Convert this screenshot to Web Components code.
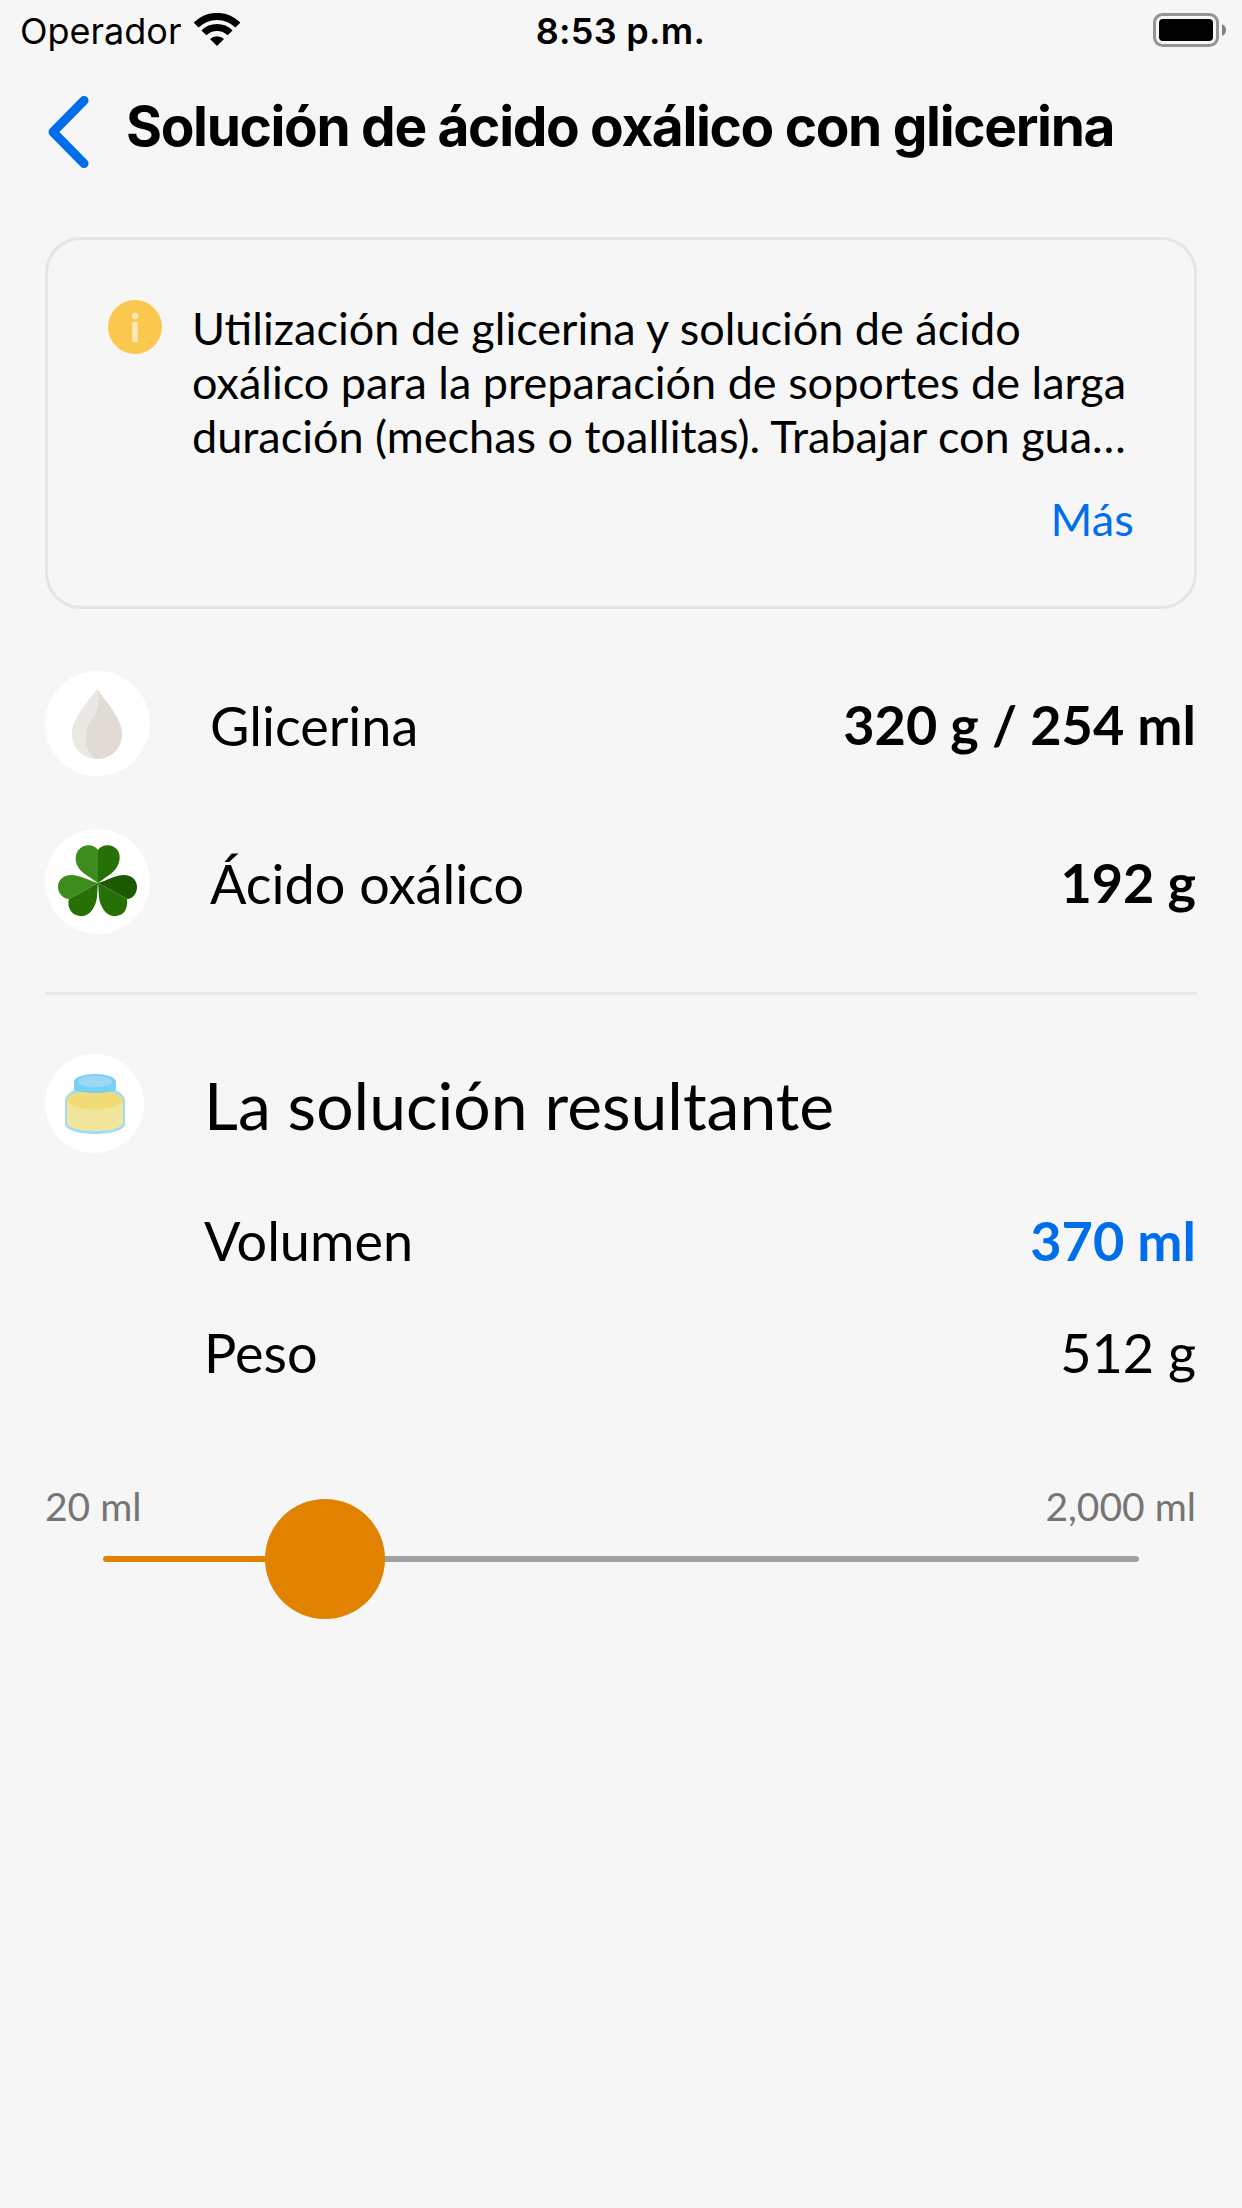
<!DOCTYPE html>
<html lang="es">
<head>
<meta charset="utf-8">
<title>Solución de ácido oxálico con glicerina</title>
<style>
  body {
    margin: 0;
    background: #f6f6f6;
    color: #000;
    font-family: Lato, "Liberation Sans", sans-serif;
    font-size: 54px;
    line-height: 1.2;
  }
</style>
</head>
<body>
<solution-page>
  <status-bar slot="status" carrier="Operador" time="8:53 p.m."></status-bar>
  <nav-header slot="header">Solución de ácido oxálico con glicerina</nav-header>
  <info-card more="Más">Utilización de glicerina y solución de ácido oxálico para la preparación de soportes de larga duración (mechas o toallitas). Trabajar con gua…</info-card>
  <ingredient-row icon="drop">Glicerina<span slot="value">320 g / 254 ml</span></ingredient-row>
  <ingredient-row icon="clover">Ácido oxálico<span slot="value">192 g</span></ingredient-row>
  <result-section heading="La solución resultante">
    <result-row accent>Volumen<span slot="value">370 ml</span></result-row>
    <result-row>Peso<span slot="value">512 g</span></result-row>
  </result-section>
  <volume-slider min-label="20 ml" max-label="2,000 ml"></volume-slider>
</solution-page>

<script>
const icons = {
  drop: `
    <svg viewBox="0 0 105 105">
      <path d="M52 18C44 30 27 47 27 63C27 77 38 88 52 88S77 77 77 63C77 47 60 30 52 18Z" fill="#ebe7e3"/>
      <path d="M52 18C54 25 54 31 53 37C50 47 41 52 41 64C40 72 43 82 50 88C66 89 77 77 77 63C77 47 60 30 52 18Z" fill="#e1dbd5"/>
    </svg>`,
  clover: `
    <svg viewBox="0 0 105 105">
      <path d="M53 54V21C50 16 42 15 37 18C30 22 29 31 33 38C37 45 47 49 53 54Z" fill="#3e8c1e"/>
      <path d="M53 54V21C56 16 64 15 69 18C76 22 76 31 72 38C68 45 59 49 53 54Z" fill="#267006"/>
      <path d="M53 54L24 70C18 70 13 64 13 58C13 51 18 46 26 46C35 46 45 52 53 54Z" fill="#3e8c1e"/>
      <path d="M53 54L24 70C22 76 25 84 31 86C38 89 45 86 49 78C53 71 52 62 53 54Z" fill="#267006"/>
      <path d="M53 54L82 70C88 70 92 64 92 58C92 51 87 46 79 46C70 46 61 52 53 54Z" fill="#1d5803"/>
      <path d="M53 54L82 70C83 76 81 84 75 86C68 89 61 86 57 78C53 71 54 62 53 54Z" fill="#267006"/>
    </svg>`,
  jar: `
    <svg viewBox="0 0 99 99">
      <path d="M29 28V36C24 39 20 42 20 47V70C20 76 34 80 50 80S80 76 80 70V47C80 42 76 39 71 36V28Z" fill="#9fdcf9"/>
      <path d="M22 47H78V69C78 74 65 77 50 77S22 74 22 69Z" fill="#f1e59b"/>
      <ellipse cx="50" cy="46" rx="28" ry="9.5" fill="#f3dc77"/>
      <path d="M29 28V35C29 37 39 39 50 39S71 37 71 35V28Z" fill="#78d0f4"/>
      <ellipse cx="50" cy="28" rx="21" ry="8" fill="#78d0f4"/>
      <ellipse cx="50" cy="27.500" rx="17" ry="5.700" fill="#9cd8f6"/>
    </svg>`
}

/**
 * Attaches an open shadow root with the given markup.
 *
 * @param {HTMLElement} host - The element that gets the shadow root.
 * @param {string} markup - Styles and markup for the shadow root.
 */
function render (host, markup) {
  host.attachShadow({ mode: 'open' }).innerHTML = markup
}

customElements.define('solution-page',

  /**
   * Screen frame: status bar, header and the content column.
   */
  class extends HTMLElement {
    constructor () {
      super()
      render(this, `
        <style>
          :host {
            display: flex;
            flex-direction: column;
            min-height: 2208px;
            box-sizing: border-box;
          }
          main {
            display: flex;
            flex-direction: column;
            padding: 57px 45px 0;
          }
        </style>
        <slot name="status"></slot>
        <slot name="header"></slot>
        <main><slot></slot></main>
      `)
    }
  }
)

customElements.define('status-bar',

  /**
   * Carrier, clock and battery.
   */
  class extends HTMLElement {
    connectedCallback () {
      render(this, `
        <style>
          :host {
            display: grid;
            grid-template-columns: 1fr auto 1fr;
            align-items: center;
            height: 60px;
            padding: 0 16px 0 20px;
            font-family: Inter, sans-serif;
            font-size: 36px;
            line-height: 44px;
          }
          .carrier {
            display: flex;
            align-items: center;
            gap: 12px;
          }
          .carrier span {
            padding-top: 2px;
          }
          .time {
            padding: 2px 5px 0 0;
            font-weight: 600;
            letter-spacing: 0.3px;
          }
          svg {
            display: block;
          }
          .battery {
            justify-self: end;
          }
        </style>
        <div class="carrier">
          <span>${this.getAttribute('carrier')}</span>
          <svg width="46" height="34" viewBox="0 0 46 34">
            <g fill="none" stroke="#000" stroke-width="7">
              <path d="M2.100 12.100A29.500 29.500 0 0 1 43.900 12.100"/>
              <path d="M9.900 19.900A18.500 18.500 0 0 1 36.100 19.900"/>
            </g>
            <path d="M16 26A10 10 0 0 1 30 26L23 33Z"/>
          </svg>
        </div>
        <span class="time">${this.getAttribute('time')}</span>
        <svg class="battery" width="73" height="34" viewBox="0 0 73 34">
          <rect x="1.500" y="1.500" width="63" height="31" rx="8" fill="none" stroke="#949494" stroke-width="3"/>
          <rect x="6" y="6" width="54" height="22" rx="4"/>
          <path d="M69 11Q73 13 73 17T69 23Z" fill="#808080"/>
        </svg>
      `)
    }
  }
)

customElements.define('nav-header',

  /**
   * Back arrow and page title.
   */
  class extends HTMLElement {
    constructor () {
      super()
      render(this, `
        <style>
          :host {
            display: flex;
            align-items: flex-start;
            gap: 37px;
            height: 120px;
            box-sizing: border-box;
            padding: 34px 48px 0;
            font-family: Inter, sans-serif;
          }
          svg {
            display: block;
            flex: none;
            margin-top: 2px;
          }
          h1 {
            margin: 0;
            font-size: 55px;
            font-weight: 700;
            line-height: 64px;
            letter-spacing: -1.34px;
            white-space: nowrap;
          }
        </style>
        <svg width="41" height="72" viewBox="0 0 41 72">
          <path d="M36 4.500L5 36L36 67.500" fill="none" stroke="#006eeb" stroke-width="9" stroke-linecap="round" stroke-linejoin="round"/>
        </svg>
        <h1><slot></slot></h1>
      `)
    }
  }
)

customElements.define('info-card',

  /**
   * Outlined note with a link to read more.
   */
  class extends HTMLElement {
    connectedCallback () {
      render(this, `
        <style>
          :host {
            display: grid;
            grid-template-columns: 54px 1fr;
            grid-template-rows: 162px auto;
            row-gap: 30px;
            column-gap: 30px;
            align-content: start;
            box-sizing: border-box;
            height: 372px;
            padding: 60px;
            border: 3px solid #e5e5e5;
            border-radius: 36px;
            font-size: 45px;
            line-height: 54px;
          }
          p {
            margin: 1px 0 0;
          }
          a {
            grid-column: 2;
            justify-self: end;
            color: #006eeb;
            letter-spacing: 0.2px;
          }
        </style>
        <svg width="54" height="54" viewBox="0 0 54 54">
          <circle cx="27" cy="27" r="27" fill="#fac74f"/>
          <circle cx="27" cy="16" r="3.200" fill="#fee9b8"/>
          <rect x="24.300" y="22" width="5.400" height="20" fill="#fee9b8"/>
        </svg>
        <p><slot></slot></p>
        <a>${this.getAttribute('more')}</a>
      `)
    }
  }
)

customElements.define('round-icon',

  /**
   * Picture on a white disc.
   */
  class extends HTMLElement {
    connectedCallback () {
      render(this, `
        <style>
          :host {
            display: block;
            flex: none;
            width: var(--size, 105px);
            height: var(--size, 105px);
            border-radius: 50%;
            background: #fff;
          }
          svg {
            display: block;
            width: 100%;
            height: 100%;
          }
        </style>
        ${icons[this.getAttribute('name')]}
      `)
    }
  }
)

customElements.define('ingredient-row',

  /**
   * Ingredient with its icon and amount.
   */
  class extends HTMLElement {
    connectedCallback () {
      render(this, `
        <style>
          :host {
            display: flex;
            align-items: center;
            height: 105px;
            margin-top: 53px;
          }
          :host(:first-of-type) {
            margin-top: 62px;
          }
          .label {
            flex: 1;
            margin-left: 60px;
            padding-top: 6px;
          }
          .value {
            padding: 4px 1px 0 0;
            font-weight: 700;
          }
        </style>
        <round-icon name="${this.getAttribute('icon')}"></round-icon>
        <span class="label"><slot></slot></span>
        <span class="value"><slot name="value"></slot></span>
      `)
    }
  }
)

customElements.define('result-section',

  /**
   * Section for the finished solution, set off by a divider.
   */
  class extends HTMLElement {
    connectedCallback () {
      render(this, `
        <style>
          :host {
            display: block;
            margin-top: 58px;
            border-top: 3px solid #e9e9e9;
          }
          header {
            display: flex;
            align-items: center;
            height: 99px;
            margin-top: 59px;
          }
          round-icon {
            --size: 99px;
          }
          h2 {
            margin: 0 0 0 60px;
            padding-top: 3px;
            font-size: 66px;
            font-weight: 400;
          }
          .rows {
            padding: 55px 1px 0 159px;
          }
        </style>
        <header>
          <round-icon name="jar"></round-icon>
          <h2>${this.getAttribute('heading')}</h2>
        </header>
        <div class="rows"><slot></slot></div>
      `)
    }
  }
)

customElements.define('result-row',

  /**
   * Name and value of one result.
   */
  class extends HTMLElement {
    constructor () {
      super()
      render(this, `
        <style>
          :host {
            display: flex;
            justify-content: space-between;
            height: 112px;
            line-height: 65px;
          }
          :host([accent]) .value {
            color: #006eeb;
            font-weight: 700;
          }
        </style>
        <span><slot></slot></span>
        <span class="value"><slot name="value"></slot></span>
      `)
    }
  }
)

customElements.define('volume-slider',

  /**
   * Slider with the limits written above its track.
   */
  class extends HTMLElement {
    connectedCallback () {
      render(this, `
        <style>
          :host {
            display: block;
            margin-top: 51px;
          }
          .limits {
            display: flex;
            justify-content: space-between;
            padding-right: 1px;
            color: #757575;
            font-size: 39px;
            line-height: 47px;
          }
          .track {
            display: flex;
            align-items: center;
            height: 120px;
            margin: -31px 58px 0;
          }
          .filled,
          .rest {
            height: 6px;
            border-radius: 3px;
          }
          .filled {
            width: 165px;
            margin-right: -3px;
            background: #e18200;
          }
          .rest {
            flex: 1;
            margin-left: -3px;
            background: #a0a0a0;
          }
          .thumb {
            z-index: 1;
            width: 120px;
            height: 120px;
            border-radius: 50%;
            background: #e18200;
          }
        </style>
        <div class="limits">
          <span>${this.getAttribute('min-label')}</span>
          <span>${this.getAttribute('max-label')}</span>
        </div>
        <div class="track">
          <div class="filled"></div>
          <div class="thumb"></div>
          <div class="rest"></div>
        </div>
      `)
    }
  }
)
</script>
</body>
</html>
